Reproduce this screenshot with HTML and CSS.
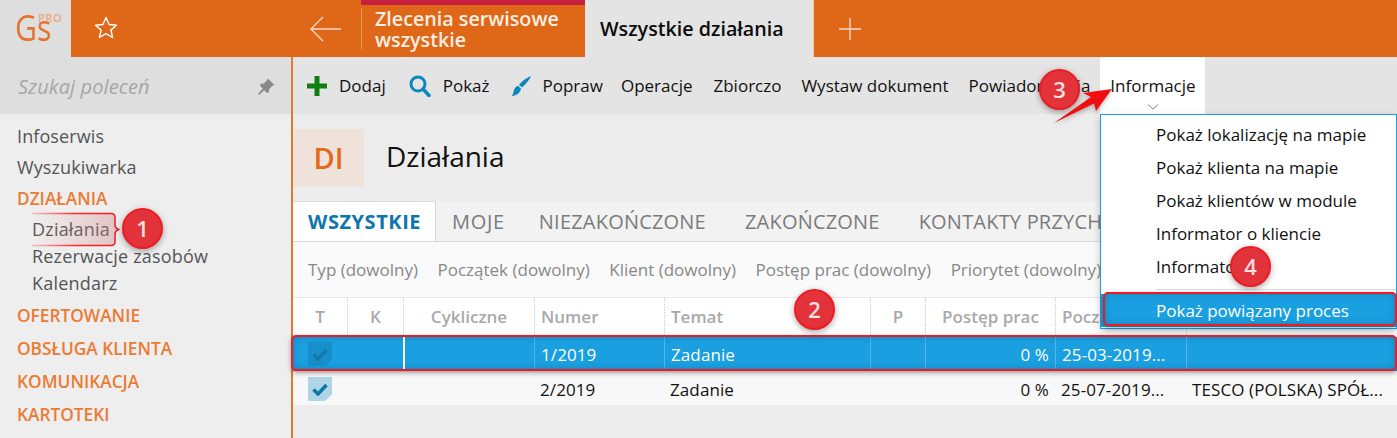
FILE: index.html
```html
<!DOCTYPE html>
<html lang="pl">
<head>
<meta charset="utf-8">
<title>Działania</title>
<link rel="stylesheet" href="styles.css">
</head>
<body>
<div class="app">
  <header class="topbar">
    <div class="logo"><span class="logo-gs">Gs</span><span class="logo-pro">PRO</span></div>
    <div class="fav">
      <svg width="26" height="26" viewBox="0 0 26 26"><path d="M13 2.500l3.100 7 7.400.7-5.600 4.900 1.700 7.400-6.600-3.900-6.600 3.900 1.700-7.400-5.600-4.900 7.400-.7z" fill="none" stroke="#fff" stroke-width="1.400" stroke-linejoin="round"/></svg>
    </div>
    <div class="back">
      <svg width="34" height="28" viewBox="0 0 34 28"><path d="M32 14H2M14 2L2 14l12 12" fill="none" stroke="#f6d9c4" stroke-width="1.400"/></svg>
    </div>
    <div class="tab-prev"><span>Zlecenia serwisowe<br>wszystkie</span></div>
    <div class="tab-active">Wszystkie działania</div>
    <div class="tab-add">
      <svg width="24" height="24" viewBox="0 0 24 24"><path d="M12 1v22M1 12h22" stroke="#f6d9c4" stroke-width="1.400"/></svg>
    </div>
  </header>
  <div class="body">
    <aside class="sidebar">
      <div class="search">
        <span>Szukaj poleceń</span>
        <svg width="20" height="20" viewBox="0 0 20 20"><path d="M12 1.500l6.500 6.500-2 .8-3.300 3.300-.4 3.400-2.200.3-2.400-2.600L3 18l-1-1 4.800-5.600-2.600-2.400.3-2.200 3.400-.4 3.300-3.300z" fill="#8a8a8a"/></svg>
      </div>
      <nav class="nav">
        <a class="nav-item nav-first">Infoserwis</a>
        <a class="nav-item">Wyszukiwarka</a>
        <a class="nav-group nav-g0">DZIAŁANIA</a>
        <a class="nav-sub">Działania</a>
        <a class="nav-sub">Rezerwacje zasobów</a>
        <a class="nav-sub">Kalendarz</a>
        <a class="nav-group nav-g1">OFERTOWANIE</a>
        <a class="nav-group">OBSŁUGA KLIENTA</a>
        <a class="nav-group">KOMUNIKACJA</a>
        <a class="nav-group">KARTOTEKI</a>
      </nav>
    </aside>
    <main class="main">
      <div class="toolbar">
        <span class="tool tool-ico">
          <svg width="20" height="20" viewBox="0 0 20 20"><path d="M7.500 0h5v7.500h7.500v5h-7.500v7.500h-5v-7.500H0v-5h7.500z" fill="#0f7f12"/></svg>Dodaj</span>
        <span class="tool tool-ico">
          <svg width="22" height="22" viewBox="0 0 22 22"><circle cx="9" cy="9" r="7" fill="none" stroke="#0c86bf" stroke-width="3"/><path d="M14 14l6 6.500" stroke="#0c86bf" stroke-width="3.500" stroke-linecap="round"/></svg>Pokaż</span>
        <span class="tool tool-ico">
          <svg width="22" height="22" viewBox="0 0 22 22"><path d="M21 1c-1 3-5 8-9 11.500l-3-2.800C12 6 18 2 21 1z" fill="#0c86bf"/><path d="M8 10.800l3 2.800c-.5 4-4 7.400-9.500 7.400 2-1.500 1.500-3.500 2.500-6 .8-2.200 2.500-3.700 4-4.200z" fill="#0c86bf"/></svg>Popraw</span>
        <span class="tool tool-oper">Operacje</span>
        <span class="tool">Zbiorczo</span>
        <span class="tool">Wystaw dokument</span>
        <span class="tool">Powiadomienia</span>
        <span class="tool tool-open">Informacje
          <svg class="chev" width="12" height="6" viewBox="0 0 12 6"><path d="M1 .5l5 4.500 5-4.500" fill="none" stroke="#888" stroke-width="1"/></svg>
        </span>
      </div>
      <div class="page-head">
        <div class="badge">DI</div>
        <h1 class="title">Działania</h1>
      </div>
      <div class="tabs">
        <span class="tabx tabx-on">WSZYSTKIE</span>
        <span class="tabx t-moje">MOJE</span>
        <span class="tabx t-nz">NIEZAKOŃCZONE</span>
        <span class="tabx t-z">ZAKOŃCZONE</span>
        <span class="tabx t-k">KONTAKTY PRZYCHODZĄCE</span>
      </div>
      <div class="filters">
        <span>Typ (dowolny)</span>
        <span>Początek (dowolny)</span>
        <span>Klient (dowolny)</span>
        <span>Postęp prac (dowolny)</span>
        <span>Priorytet (dowolny)</span>
      </div>
      <div class="grid grid-head">
        <span class="c c-center">T</span>
        <span class="c c-center">K</span>
        <span class="c c-center">Cykliczne</span>
        <span class="c">Numer</span>
        <span class="c">Temat</span>
        <span class="c c-center">P</span>
        <span class="c c-center">Postęp prac</span>
        <span class="c">Początek</span>
        <span class="c"></span>
      </div>
      <div class="grid grid-row row-sel">
        <span class="c c-check"><i class="check check-sel"><svg width="16" height="13" viewBox="0 0 16 13"><path d="M1.500 6.500l4.500 4.500 8.500-9" fill="none" stroke="#1278a8" stroke-width="3.500"/></svg></i></span>
        <span class="c"></span>
        <span class="c c-wline"></span>
        <span class="c">1/2019</span>
        <span class="c">Zadanie</span>
        <span class="c"></span>
        <span class="c c-right">0 %</span>
        <span class="c">25-03-2019...</span>
        <span class="c"></span>
      </div>
      <div class="grid grid-row row-plain">
        <span class="c c-check"><i class="check"><svg width="16" height="13" viewBox="0 0 16 13"><path d="M1.500 6.500l4.500 4.500 8.500-9" fill="none" stroke="#0d76a8" stroke-width="3.500"/></svg></i></span>
        <span class="c"></span>
        <span class="c"></span>
        <span class="c">2/2019</span>
        <span class="c">Zadanie</span>
        <span class="c"></span>
        <span class="c c-right">0 %</span>
        <span class="c">25-07-2019...</span>
        <span class="c">TESCO (POLSKA) SPÓŁ...</span>
      </div>
    </main>
  </div>

  <div class="menu">
    <a class="menu-item">Pokaż lokalizację na mapie</a>
    <a class="menu-item">Pokaż klienta na mapie</a>
    <a class="menu-item">Pokaż klientów w module</a>
    <a class="menu-item">Informator o kliencie</a>
    <a class="menu-item">Informator</a>
    <div class="menu-sep"></div>
    <a class="menu-item menu-sel">Pokaż powiązany proces</a>
  </div>

  <svg class="nav-frame" width="90" height="36" viewBox="0 0 90 36">
    <defs>
      <linearGradient id="fa"><stop offset="0" stop-color="#d99" stop-opacity="0"/><stop offset="1" stop-color="#c77" stop-opacity=".38"/></linearGradient>
      <linearGradient id="fb"><stop offset="0" stop-color="#f33" stop-opacity=".25"/><stop offset=".5" stop-color="#f11" stop-opacity=".9"/><stop offset="1" stop-color="#ee1c24"/></linearGradient>
    </defs>
    <path d="M1 1.500H80q4 0 4 4V13q0 3 3.500 4.500Q84 19 84 22v7.500q0 4-4 4H1z" fill="url(#fa)"/>
    <path d="M1 1.500H80q4 0 4 4V13q0 3 3.500 4.500Q84 19 84 22v7.500q0 4-4 4H1" fill="none" stroke="url(#fb)" stroke-width="1.500"/>
  </svg>
  <div class="frame frame-row"></div>
  <div class="frame frame-menu"></div>
  <span class="pin pin1">1</span>
  <span class="pin pin2">2</span>
  <span class="pin pin3">3</span>
  <span class="pin pin4">4</span>
  <svg class="arrow" width="66" height="42" viewBox="0 0 66 42"><path d="M62 4L46 26l-2-7.500L4 38l37-26-8-4z" fill="#f20d10"/></svg>
</div>
</body>
</html>
```
FILE: styles.css
```css
* { box-sizing: border-box; }
html, body { margin: 0; padding: 0; background: #fff; }
body { font-family: "Open Sans", "Noto Sans", sans-serif; font-size: 17px; color: #111; overflow: hidden; }
.app { position: relative; width: 1397px; height: 438px; overflow: hidden; }

.topbar { display: flex; height: 57px; background: #df6718; }
.logo { position: relative; width: 71px; background: #dedede; }
.logo-gs { position: absolute; left: 15px; top: 4px; font-size: 36px; line-height: 48px; color: #e5732a; transform: scaleX(.84); transform-origin: 0 50%; }
.logo-pro { position: absolute; left: 38px; top: 12px; font-size: 11px; line-height: 11px; font-weight: 600; color: #eaa680; letter-spacing: .6px; }
.fav { width: 70px; display: flex; align-items: center; justify-content: center; padding-right: 1px; padding-bottom: 1px; }
.back { width: 220px; display: flex; align-items: center; justify-content: flex-end; padding-right: 18px; }
.tab-prev { width: 224px; border-top: 5px solid #c8203f; color: #fdeee3; font-weight: 600; font-size: 19.700px; line-height: 21px; position: relative; padding: 3px 0 0 14px; white-space: nowrap; }
.tab-prev::before { content: ""; position: absolute; left: 0; top: 3px; bottom: 8px; width: 1px; background: #ec9a63; }
.tab-active { width: 228px; background: #e4e4e4; font-weight: 600; font-size: 19.700px; display: flex; align-items: center; padding-left: 15px; color: #0c0c0c; white-space: nowrap; }
.tab-add { width: 73px; display: flex; align-items: center; justify-content: center; border-left: 1px solid #f0c8a8; }

.body { display: flex; height: 381px; }
.sidebar { width: 293px; flex: none; background: #eee; border-right: 2px solid #df7a33; }
.search { height: 57px; background: #dedede; display: flex; align-items: center; justify-content: space-between; padding: 2px 15px 0 18px; font-style: italic; font-size: 20px; color: #a6a6a6; letter-spacing: .1px; }
.nav { display: flex; flex-direction: column; font-size: 18px; }
.nav a { display: block; white-space: nowrap; }
.nav-item { height: 31px; line-height: 31px; padding-left: 17px; color: #555; letter-spacing: .1px; }
.nav-first { margin-top: 7px; }
.nav-group { height: 33px; line-height: 33px; padding-left: 17px; color: #ec7a32; font-weight: 600; font-size: 17.300px; }
.nav-g0 { line-height: 31px; }
.nav-g1 { margin-top: 2px; }
.nav-sub { height: 27px; line-height: 27px; padding-left: 32px; color: #555; letter-spacing: .2px; }

.main { flex: 1; min-width: 0; background: #ececec; }
.toolbar { height: 57px; background: #e4e4e4; display: flex; align-items: stretch; padding-left: 14px; color: #111; }
.tool { display: flex; align-items: center; white-space: nowrap; margin-right: 20px; }
.tool-ico svg { margin-right: 12px; }
.tool-ico:nth-child(1) { margin-right: 23px; }
.tool-ico:nth-child(2) { margin-right: 20px; }
.tool-ico:nth-child(3) { margin-right: 18px; }
.tool-ico:nth-child(3) svg { margin-right: 11px; }
.tool-oper { margin-right: 21px; }
.tool-open { position: relative; background: #fff; padding: 0 10px; width: 105px; margin-left: -10px; margin-right: 0; }
.chev { position: absolute; left: 47px; top: 47px; }

.page-head { height: 87px; display: flex; padding-top: 15px; }
.badge { width: 71px; height: 57px; background: #efe2da; color: #e5691b; font-size: 29px; line-height: 57px; text-align: center; font-weight: 600; }
.title { margin: 0 0 0 22px; font-weight: 400; font-size: 28px; line-height: 54px; color: #111; }

.tabs { height: 41px; background: #f2f2f2; border-bottom: 1px solid #d8d8d8; display: flex; font-size: 20px; color: #7b7b7b; white-space: nowrap; overflow: hidden; letter-spacing: .2px; line-height: 42px; }
.tabx { display: block; }
.tabx-on { width: 143px; background: #fff; color: #0d76ad; font-weight: 700; padding-left: 15px; border-right: 1px solid #d8d8d8; border-top: 1px solid #ddd; height: 41px; margin-bottom: -1px; letter-spacing: .55px; line-height: 40px; }
.t-moje { margin-left: 16px; letter-spacing: .7px; }
.t-nz { margin-left: 34px; }
.t-z { margin-left: 39px; }
.t-k { margin-left: 39px; }

.filters { height: 56px; background: #fafafa; display: flex; gap: 19.500px; padding: 0 0 0 15px; align-items: center; color: #888; white-space: nowrap; overflow: hidden; border-bottom: 1px solid #e8e8e8; }

.grid { display: grid; grid-template-columns: 54px 56px 131px 130px 206px 55px 130px 131px 1fr; white-space: nowrap; }
.c { display: block; padding-left: 6px; overflow: hidden; }
.c-center { text-align: center; padding: 0; }
.c-right { text-align: right; padding: 0 6px 0 0; }
.grid-head { height: 39px; background: #fff; color: #a9a9a9; font-weight: 600; line-height: 38px; }
.grid-head .c + .c { border-left: 1px dotted #ccc; }
.grid-row { line-height: 35px; letter-spacing: .1px; }
.row-sel { height: 34px; background: #1a9fe0; color: #fff; }
.row-sel .c + .c + .c + .c { border-left: 1px solid #55b5e6; }
.row-sel .c-wline { border-left: 2px solid #fff; }
.row-plain { height: 33px; background: #f8f8f8; margin-top: 1px; }
.c-check { padding: 5px 0 0 15px; }
.check { display: flex; align-items: center; justify-content: center; width: 24px; height: 24px; background: #aed6e8; clip-path: polygon(0 0, 100% 0, 100% 72%, 72% 100%, 0 100%); }
.check-sel { background: #178fca; }

.menu { position: absolute; left: 1100px; top: 114px; width: 297px; height: 215px; background: #fff; border: 1px solid #1a9fe0; box-shadow: 0 3px 8px rgba(0,0,0,.2); padding-top: 3px; color: #111; }
.menu-item { display: block; height: 33px; line-height: 33px; padding-left: 55px; white-space: nowrap; }
.menu-sep { height: 1px; background: #ddd; margin: 6px 0 4px 55px; }
.menu-sel { background: #1a9fe0; color: #fff; }

.nav-frame { position: absolute; left: 31px; top: 212px; }
.frame { position: absolute; border: 2px solid #ed1c24; border-radius: 5px; box-shadow: 0 2px 5px rgba(0,0,0,.35), inset 0 0 6px rgba(0,0,0,.2); }
.frame-row { left: 291px; top: 335px; width: 1106px; height: 36px; }
.frame-menu { left: 1103px; top: 292px; width: 294px; height: 34px; }

.arrow { position: absolute; left: 1050px; top: 85px; filter: drop-shadow(0 2px 2px rgba(0,0,0,.25)); }
.pin { position: absolute; width: 41px; height: 41px; border-radius: 50%; background: #e2323a; border: 2px solid #ed1c24; color: #f6e2e2; font-size: 22px; font-weight: 600; line-height: 36px; text-align: center; box-shadow: 0 2px 6px rgba(0,0,0,.35); }
.pin1 { left: 122px; top: 208px; }
.pin2 { left: 794px; top: 289px; }
.pin3 { left: 1039px; top: 69px; }
.pin4 { left: 1230px; top: 246px; }
```
